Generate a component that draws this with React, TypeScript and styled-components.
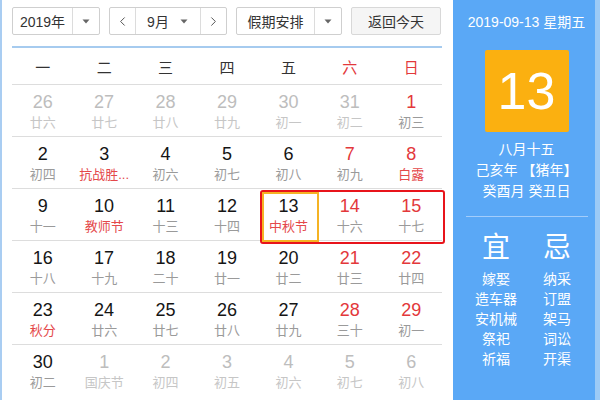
import { createGlobalStyle, styled } from 'styled-components';
import { ChevronLeft, ChevronRight } from 'lucide-react';

const GlobalStyle = createGlobalStyle`
  html, body {
    margin: 0;
    padding: 0;
    background: #fff;
  }
  body {
    font-family: "Liberation Sans", "Noto Sans CJK SC", sans-serif;
  }
`;

type Day = {
  num: number;
  lunar: string;
  other?: boolean;
  weekend?: boolean;
  festival?: boolean;
};

const d = (num: number, lunar: string, opts: Partial<Day> = {}): Day => ({
  num,
  lunar,
  ...opts,
});

const weeks: Day[][] = [
  [
    d(26, '廿六', { other: true }),
    d(27, '廿七', { other: true }),
    d(28, '廿八', { other: true }),
    d(29, '廿九', { other: true }),
    d(30, '初一', { other: true }),
    d(31, '初二', { other: true }),
    d(1, '初三', { weekend: true }),
  ],
  [
    d(2, '初四'),
    d(3, '抗战胜...', { festival: true }),
    d(4, '初六'),
    d(5, '初七'),
    d(6, '初八'),
    d(7, '初九', { weekend: true }),
    d(8, '白露', { weekend: true, festival: true }),
  ],
  [
    d(9, '十一'),
    d(10, '教师节', { festival: true }),
    d(11, '十三'),
    d(12, '十四'),
    d(13, '中秋节', { festival: true }),
    d(14, '十六', { weekend: true }),
    d(15, '十七', { weekend: true }),
  ],
  [
    d(16, '十八'),
    d(17, '十九'),
    d(18, '二十'),
    d(19, '廿一'),
    d(20, '廿二'),
    d(21, '廿三', { weekend: true }),
    d(22, '廿四', { weekend: true }),
  ],
  [
    d(23, '秋分', { festival: true }),
    d(24, '廿六'),
    d(25, '廿七'),
    d(26, '廿八'),
    d(27, '廿九'),
    d(28, '三十', { weekend: true }),
    d(29, '初一', { weekend: true }),
  ],
  [
    d(30, '初二'),
    d(1, '国庆节', { other: true }),
    d(2, '初四', { other: true }),
    d(3, '初五', { other: true }),
    d(4, '初六', { other: true }),
    d(5, '初七', { other: true }),
    d(6, '初八', { other: true }),
  ],
];

const weekdays = ['一', '二', '三', '四', '五', '六', '日'];

const good = ['嫁娶', '造车器', '安机械', '祭祀', '祈福'];
const bad = ['纳采', '订盟', '架马', '词讼', '开渠'];

const Caret = () => (
  <svg width="8" height="5" viewBox="0 0 8 5">
    <path d="M0.5 0.5 L7.5 0.5 L4 4.5 Z" fill="#666" />
  </svg>
);

export default function App() {
  return (
    <>
      <GlobalStyle />
      <Wrapper>
        <Main>
          <Toolbar>
            <Select $width={88}>
              <SelectText>2019年</SelectText>
              <CaretBox>
                <Caret />
              </CaretBox>
            </Select>
            <Select $width={118}>
              <ArrowBox $side="left">
                <ChevronLeft size={15} strokeWidth={1.6} color="#555" />
              </ArrowBox>
              <SelectText>9月</SelectText>
              <InlineCaret>
                <Caret />
              </InlineCaret>
              <ArrowBox $side="right">
                <ChevronRight size={15} strokeWidth={1.6} color="#555" />
              </ArrowBox>
            </Select>
            <Select $width={106}>
              <SelectText>假期安排</SelectText>
              <CaretBox>
                <Caret />
              </CaretBox>
            </Select>
            <TodayButton>返回今天</TodayButton>
          </Toolbar>
          <BlueRule />
          <WeekHeader>
            {weekdays.map((w, i) => (
              <WeekdayLabel key={w} $red={i >= 5}>
                {w}
              </WeekdayLabel>
            ))}
          </WeekHeader>
          {weeks.map((week, wi) => (
            <WeekRow key={wi} $last={wi === weeks.length - 1}>
              {week.map((day, di) => (
                <Cell key={di}>
                  <DayNum $other={day.other} $red={day.weekend && !day.other}>
                    {day.num}
                  </DayNum>
                  <Lunar $other={day.other} $festival={day.festival && !day.other}>
                    {day.lunar}
                  </Lunar>
                </Cell>
              ))}
              {wi === 2 && (
                <>
                  <RangeBox />
                  <TodayBox />
                </>
              )}
            </WeekRow>
          ))}
        </Main>
        <Side>
          <SideDate>2019-09-13 星期五</SideDate>
          <BigDay>13</BigDay>
          <SideLine $top={7}>八月十五</SideLine>
          <SideLine>己亥年 【猪年】</SideLine>
          <SideLine>癸酉月 癸丑日</SideLine>
          <SideRule />
          <Almanac>
            <AlmanacCol>
              <AlmanacHead>宜</AlmanacHead>
              {good.map(g => (
                <AlmanacItem key={g}>{g}</AlmanacItem>
              ))}
            </AlmanacCol>
            <AlmanacCol>
              <AlmanacHead>忌</AlmanacHead>
              {bad.map(b => (
                <AlmanacItem key={b}>{b}</AlmanacItem>
              ))}
            </AlmanacCol>
          </Almanac>
        </Side>
      </Wrapper>
    </>
  );
}

const Wrapper = styled.div`
  display: flex;
  width: 600px;
  height: 400px;
  border-left: 2px solid #a9cdf2;
  box-sizing: border-box;
  overflow: hidden;
`;

const Main = styled.div`
  width: 451px;
  flex-shrink: 0;
  padding: 7px 11px 0 10px;
  box-sizing: border-box;
`;

const Toolbar = styled.div`
  display: flex;
  gap: 9px;
  height: 28px;
`;

const Select = styled.div<{ $width: number }>`
  display: flex;
  align-items: stretch;
  width: ${({ $width }) => $width}px;
  height: 28px;
  box-sizing: border-box;
  border: 1px solid #cfcfcf;
  border-radius: 2px;
  background: #fff;
`;

const SelectText = styled.div`
  flex: 1;
  display: flex;
  align-items: center;
  justify-content: center;
  font-size: 14px;
  color: #333;
`;

const CaretBox = styled.div`
  width: 26px;
  display: flex;
  align-items: center;
  justify-content: center;
  border-left: 1px solid #dcdcdc;
`;

const InlineCaret = styled.div`
  width: 20px;
  display: flex;
  align-items: center;
  justify-content: flex-start;
`;

const ArrowBox = styled.div<{ $side: 'left' | 'right' }>`
  width: 25px;
  display: flex;
  align-items: center;
  justify-content: center;
  ${({ $side }) =>
    $side === 'left' ? 'border-right: 1px solid #dcdcdc;' : 'border-left: 1px solid #dcdcdc;'}
`;

const TodayButton = styled.div`
  width: 90px;
  height: 28px;
  box-sizing: border-box;
  border: 1px solid #d8d8d8;
  border-radius: 2px;
  background: #f5f5f5;
  display: flex;
  align-items: center;
  justify-content: center;
  font-size: 14px;
  color: #333;
`;

const BlueRule = styled.div`
  height: 2px;
  margin-top: 11px;
  background: #a6cbef;
`;

const WeekHeader = styled.div`
  display: grid;
  grid-template-columns: repeat(7, 1fr);
  height: 36px;
  border-bottom: 1px solid #dddddd;
`;

const WeekdayLabel = styled.div<{ $red?: boolean }>`
  display: flex;
  align-items: center;
  justify-content: center;
  font-size: 15px;
  color: ${({ $red }) => ($red ? '#e3383b' : '#333')};
`;

const WeekRow = styled.div<{ $last?: boolean }>`
  position: relative;
  display: grid;
  grid-template-columns: repeat(7, 1fr);
  height: 51px;
  border-bottom: ${({ $last }) => ($last ? 'none' : '1px solid #dddddd')};
`;

const Cell = styled.div`
  display: flex;
  flex-direction: column;
  align-items: center;
  justify-content: center;
  gap: 1px;
`;

const DayNum = styled.div<{ $other?: boolean; $red?: boolean }>`
  font-size: 18px;
  line-height: 22px;
  color: ${({ $other, $red }) => ($other ? '#bdbdbd' : $red ? '#e3383b' : '#151515')};
`;

const Lunar = styled.div<{ $other?: boolean; $festival?: boolean }>`
  font-size: 13px;
  line-height: 17px;
  white-space: nowrap;
  color: ${({ $other, $festival }) => ($other ? '#c6c6c6' : $festival ? '#e4484a' : '#9a9a9a')};
`;

const RangeBox = styled.div`
  position: absolute;
  left: calc(400% / 7 + 2px);
  right: -3px;
  top: 1px;
  bottom: -4px;
  border: 2px solid #e8141b;
  border-radius: 3px;
  pointer-events: none;
`;

const TodayBox = styled.div`
  position: absolute;
  left: calc(400% / 7 + 4px);
  width: calc(100% / 7 - 4px);
  top: 3px;
  bottom: -2px;
  box-sizing: border-box;
  border: 2px solid #f5b324;
  pointer-events: none;
`;

const Side = styled.div`
  flex: 1;
  background: #5aa8f6;
  box-shadow: inset -5px 0 0 #9ccaf6;
  display: flex;
  flex-direction: column;
  align-items: center;
  color: #fff;
  padding-top: 12px;
  box-sizing: border-box;
`;

const SideDate = styled.div`
  font-size: 14px;
  line-height: 20px;
`;

const BigDay = styled.div`
  width: 84px;
  height: 82px;
  margin-top: 18px;
  background: #fbb010;
  border-radius: 2px;
  display: flex;
  align-items: center;
  justify-content: center;
  font-size: 52px;
  color: #fff;
`;

const SideLine = styled.div<{ $top?: number }>`
  font-size: 14px;
  line-height: 21px;
  margin-top: ${({ $top }) => $top ?? 0}px;
`;

const SideRule = styled.div`
  width: 122px;
  height: 1px;
  margin-top: 14px;
  background: #a3cdfb;
`;

const Almanac = styled.div`
  display: grid;
  grid-template-columns: 61px 61px;
  margin-top: 14px;
`;

const AlmanacCol = styled.div`
  display: flex;
  flex-direction: column;
  align-items: center;
`;

const AlmanacHead = styled.div`
  font-size: 28px;
  line-height: 34px;
  margin-bottom: 4px;
`;

const AlmanacItem = styled.div`
  font-size: 14px;
  line-height: 20px;
`;
